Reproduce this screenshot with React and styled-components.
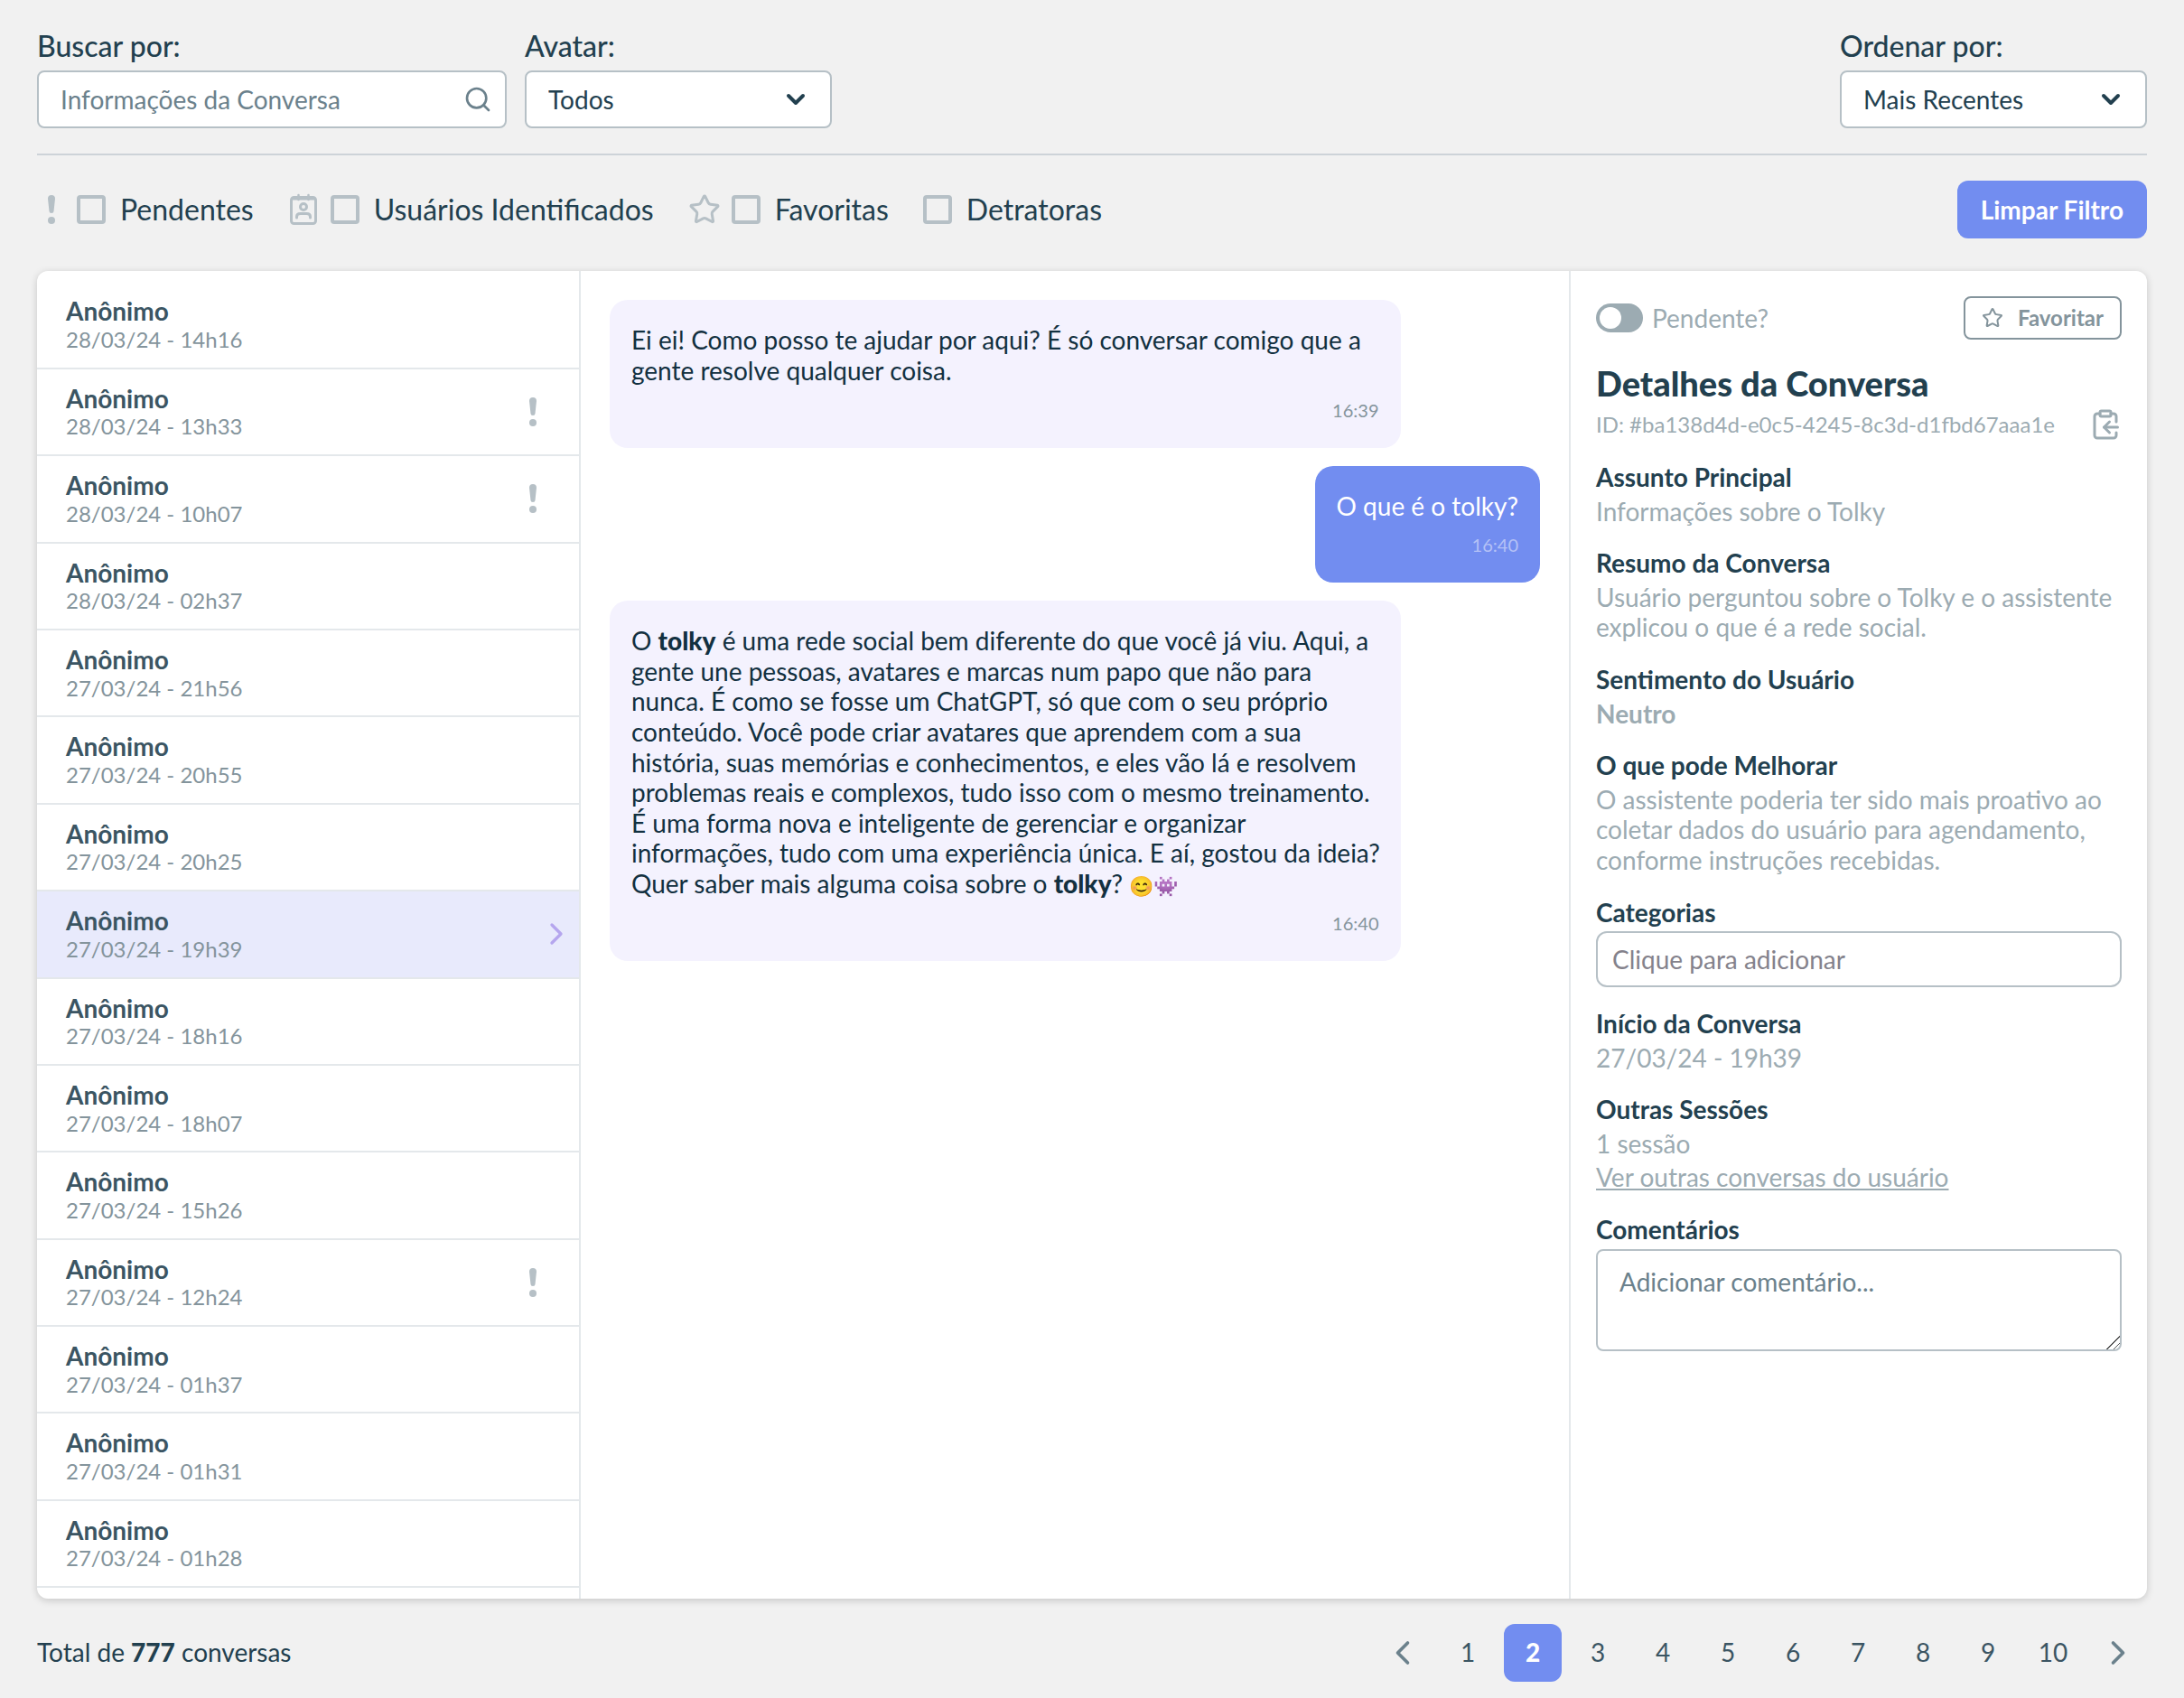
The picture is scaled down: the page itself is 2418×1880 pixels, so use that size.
import styled, { createGlobalStyle } from "styled-components";
import { ChevronDown, ChevronLeft, ChevronRight, ClipboardCopy, Search, Star } from "lucide-react";

const conversations = [
  { id: 1, date: "28/03/24 - 14h16" },
  { id: 2, date: "28/03/24 - 13h33", pending: true },
  { id: 3, date: "28/03/24 - 10h07", pending: true },
  { id: 4, date: "28/03/24 - 02h37" },
  { id: 5, date: "27/03/24 - 21h56" },
  { id: 6, date: "27/03/24 - 20h55" },
  { id: 7, date: "27/03/24 - 20h25" },
  { id: 8, date: "27/03/24 - 19h39", selected: true },
  { id: 9, date: "27/03/24 - 18h16" },
  { id: 10, date: "27/03/24 - 18h07" },
  { id: 11, date: "27/03/24 - 15h26" },
  { id: 12, date: "27/03/24 - 12h24", pending: true },
  { id: 13, date: "27/03/24 - 01h37" },
  { id: 14, date: "27/03/24 - 01h31" },
  { id: 15, date: "27/03/24 - 01h28" },
];

const pages = [1, 2, 3, 4, 5, 6, 7, 8, 9, 10];

export default function App() {
  return (
    <Page>
      <GlobalStyle />
      <TopBar>
        <Field $width={520}>
          <FieldLabel htmlFor="search">Buscar por:</FieldLabel>
          <Control>
            <SearchInput id="search" type="search" placeholder="Informações da Conversa" />
            <ControlIcon $right={16} $color="#6b818c">
              <Search size={32} strokeWidth={2} />
            </ControlIcon>
          </Control>
        </Field>
        <Field $width={340}>
          <FieldLabel htmlFor="avatar">Avatar:</FieldLabel>
          <Select id="avatar" value="Todos" />
        </Field>
        <Field $width={340} $end>
          <FieldLabel htmlFor="order">Ordenar por:</FieldLabel>
          <Select id="order" value="Mais Recentes" />
        </Field>
      </TopBar>

      <FilterBar>
        <Filter>
          <AlertIcon />
          <Checkbox type="checkbox" />
          Pendentes
        </Filter>
        <Filter>
          <BadgeIcon />
          <Checkbox type="checkbox" />
          Usuários Identificados
        </Filter>
        <Filter>
          <Star size={36} strokeWidth={2} color="#b6c0c6" />
          <Checkbox type="checkbox" />
          Favoritas
        </Filter>
        <Filter>
          <Checkbox type="checkbox" />
          Detratoras
        </Filter>
        <ClearButton type="button">Limpar Filtro</ClearButton>
      </FilterBar>

      <Panel>
        <List>
          {conversations.map(({ id, date, pending, selected }) => (
            <li key={id}>
              <Row type="button" $selected={selected}>
                <RowText>
                  <RowName>Anônimo</RowName>
                  <RowDate>{date}</RowDate>
                </RowText>
                <Slot>{pending && <AlertIcon />}</Slot>
                <Slot>{selected && <ChevronRight size={40} strokeWidth={2} color="#b5a6ee" />}</Slot>
              </Row>
            </li>
          ))}
        </List>

        <Chat>
          <Bubble>
            <Message>
              Ei ei! Como posso te ajudar por aqui? É só conversar comigo que a gente resolve qualquer coisa.
            </Message>
            <Time>16:39</Time>
          </Bubble>
          <Bubble $mine>
            <p>O que é o tolky?</p>
            <Time $mine>16:40</Time>
          </Bubble>
          <Bubble>
            <Message>
              O <strong>tolky</strong> é uma rede social bem diferente do que você já viu. Aqui, a gente une
              pessoas, avatares e marcas num papo que não para nunca. É como se fosse um ChatGPT, só que com o
              seu próprio conteúdo. Você pode criar avatares que aprendem com a sua história, suas memórias e
              conhecimentos, e eles vão lá e resolvem problemas reais e complexos, tudo isso com o mesmo
              treinamento. É uma forma nova e inteligente de gerenciar e organizar informações, tudo com uma
              experiência única. E aí, gostou da ideia? Quer saber mais alguma coisa sobre o{" "}
              <strong>tolky</strong>? <Emoji>😊👾</Emoji>
            </Message>
            <Time>16:40</Time>
          </Bubble>
        </Chat>

        <Details>
          <DetailsTop>
            <ToggleLabel>
              <Toggle type="checkbox" role="switch" />
              Pendente?
            </ToggleLabel>
            <FavoriteButton type="button">
              <Star size={24} strokeWidth={2} />
              Favoritar
            </FavoriteButton>
          </DetailsTop>
          <Title>Detalhes da Conversa</Title>
          <IdLine>
            <span>ID: #ba138d4d-e0c5-4245-8c3d-d1fbd67aaa1e</span>
            <CopyButton type="button" aria-label="Copiar ID">
              <ClipboardCopy size={36} strokeWidth={2} />
            </CopyButton>
          </IdLine>
          <Sections>
            <Section>
              <Heading>Assunto Principal</Heading>
              <p>Informações sobre o Tolky</p>
            </Section>
            <Section>
              <Heading>Resumo da Conversa</Heading>
              <p>Usuário perguntou sobre o Tolky e o assistente explicou o que é a rede social.</p>
            </Section>
            <Section>
              <Heading>Sentimento do Usuário</Heading>
              <Mood>Neutro</Mood>
            </Section>
            <Section>
              <Heading>O que pode Melhorar</Heading>
              <p>
                O assistente poderia ter sido mais proativo ao coletar dados do usuário para agendamento,
                conforme instruções recebidas.
              </p>
            </Section>
            <Section>
              <Heading as="label" htmlFor="categories">Categorias</Heading>
              <CategoryInput id="categories" type="text" placeholder="Clique para adicionar" />
            </Section>
            <Section>
              <Heading>Início da Conversa</Heading>
              <p>27/03/24 - 19h39</p>
            </Section>
            <Section>
              <Heading>Outras Sessões</Heading>
              <p>1 sessão</p>
              <OtherLink href="#">Ver outras conversas do usuário</OtherLink>
            </Section>
            <Section>
              <Heading as="label" htmlFor="comments">Comentários</Heading>
              <Comment id="comments" placeholder="Adicionar comentário..." />
            </Section>
          </Sections>
        </Details>
      </Panel>

      <Footer>
        <p>
          Total de <strong>777</strong> conversas
        </p>
        <Pagination>
          <PageButton type="button" aria-label="Anterior">
            <ChevronLeft size={44} strokeWidth={2} color="#6b818c" />
          </PageButton>
          {pages.map((page) => (
            <PageButton type="button" key={page} $active={page === 2}>
              {page}
            </PageButton>
          ))}
          <PageButton type="button" aria-label="Próxima">
            <ChevronRight size={44} strokeWidth={2} color="#6b818c" />
          </PageButton>
        </Pagination>
      </Footer>
    </Page>
  );
}

function Select({ id, value }) {
  return (
    <Control>
      <SelectBox id={id} defaultValue={value}>
        <option>{value}</option>
      </SelectBox>
      <ControlIcon $right={24} $color="#22404f">
        <ChevronDown size={32} strokeWidth={3} />
      </ControlIcon>
    </Control>
  );
}

function AlertIcon() {
  return (
    <svg width="32" height="32" viewBox="0 0 32 32" fill="#b6c0c6" aria-hidden="true">
      <path d="M12 4a4 4 0 0 1 8 0l-1.5 14a2.5 2 0 0 1-5 0z" />
      <circle cx="16" cy="28" r="4" />
    </svg>
  );
}

function BadgeIcon() {
  return (
    <svg width="35" height="36" viewBox="-1 0 35 36" fill="none" stroke="#b6c0c6" strokeWidth="3" strokeLinecap="round" aria-hidden="true">
      <rect x="2.5" y="4.5" width="27" height="29" rx="3" />
      <path d="M3 6.5h26" strokeWidth="2" />
      <path d="M10.5 2v5M21.5 2v5" strokeWidth="2.5" />
      <circle cx="16" cy="15" r="3.5" />
      <path d="M8.5 27v-1c0-2.5 2-3.5 4-3.5h7c2 0 4 1 4 3.5v1" />
    </svg>
  );
}

const GlobalStyle = createGlobalStyle`
  * {
    box-sizing: border-box;
    margin: 0;
    padding: 0;
  }

  body {
    background-color: #f1f1f1;
    color: #22404f;
    font-family: Lato, "Open Sans", sans-serif;
    font-size: 28px;
    line-height: 1.2;
  }

  button, input, select, textarea {
    font: inherit;
    color: inherit;
  }

  button {
    cursor: pointer;
  }

  strong {
    font-weight: 900;
  }
`;

const Page = styled.main`
  display: flex;
  flex-direction: column;
  height: 100vh;
  padding: 32px 41px 18px;
`;

const TopBar = styled.header`
  display: flex;
  gap: 20px;
  padding-bottom: 28px;
  border-bottom: 2px solid #cdd3d8;
`;

const Field = styled.div`
  display: flex;
  flex-direction: column;
  gap: 8px;
  width: ${({ $width }) => $width}px;
  margin-left: ${({ $end }) => ($end ? "auto" : "0")};
`;

const FieldLabel = styled.label`
  font-size: 32px;
  font-weight: 500;
`;

const Control = styled.div`
  position: relative;
`;

const SearchInput = styled.input`
  width: 100%;
  height: 64px;
  padding: 0 64px 0 24px;
  appearance: none;
  background-color: #fff;
  border: 2px solid #b6c0c6;
  border-radius: 8px;

  &::placeholder {
    color: #6b818c;
  }
`;

const SelectBox = styled(SearchInput).attrs({ as: "select" })``;

const ControlIcon = styled.span`
  display: flex;
  align-items: center;
  position: absolute;
  top: 0;
  bottom: 0;
  right: ${({ $right }) => $right}px;
  color: ${({ $color }) => $color};
  pointer-events: none;
`;

const FilterBar = styled.div`
  display: flex;
  align-items: center;
  gap: 38px;
  padding: 28px 0 36px;
`;

const Filter = styled.label`
  display: flex;
  align-items: center;
  gap: 12px;
  font-size: 32px;
`;

const Checkbox = styled.input`
  appearance: none;
  width: 32px;
  height: 32px;
  margin-right: 4px;
  border: 4px solid #b6c0c6;
  border-radius: 4px;
`;

const ClearButton = styled.button`
  height: 64px;
  margin-left: auto;
  padding: 0 26px;
  font-weight: 700;
  color: #fff;
  background-color: #728df0;
  border: none;
  border-radius: 12px;
`;

const Panel = styled.section`
  flex: 1;
  min-height: 0;
  display: grid;
  grid-template-columns: 602px 1fr 640px;
  overflow: hidden;
  background-color: #fff;
  border-radius: 12px;
  box-shadow: 0 2px 8px rgb(0 0 0 / 18%);
`;

const List = styled.ul`
  padding-top: 12px;
  list-style: none;
  overflow: hidden;
  border-right: 2px solid #e4e8eb;
`;

const Row = styled.button`
  display: flex;
  align-items: center;
  width: 100%;
  padding: 16px 12px 16px 32px;
  text-align: left;
  background-color: ${({ $selected }) => ($selected ? "#e8eafc" : "transparent")};
  border: none;
  border-bottom: 2px solid #e4e8eb;
`;

const RowText = styled.span`
  flex: 1;
  display: flex;
  flex-direction: column;
`;

const RowName = styled.span`
  font-weight: 700;
  color: #3b5563;
`;

const RowDate = styled.span`
  font-size: 24px;
  color: #84949c;
`;

const Slot = styled.span`
  display: flex;
  justify-content: center;
  width: 26px;
  flex-shrink: 0;

  svg {
    flex-shrink: 0;
  }
`;

const Chat = styled.div`
  display: flex;
  flex-direction: column;
  align-items: flex-start;
  gap: 20px;
  padding: 32px;
`;

const Bubble = styled.article`
  display: flex;
  flex-direction: column;
  gap: 14px;
  max-width: 85%;
  padding: 28px 24px 30px;
  align-self: ${({ $mine }) => ($mine ? "flex-end" : "flex-start")};
  color: ${({ $mine }) => ($mine ? "#fff" : "#123040")};
  background-color: ${({ $mine }) => ($mine ? "#728df0" : "#f4f2fe")};
  border-radius: 20px;
`;

const Message = styled.p`
  margin-right: -6px;
`;

const Emoji = styled.span`
  font-size: 22px;
  line-height: 1;
`;

const Time = styled.time`
  align-self: flex-end;
  font-size: 20px;
  color: ${({ $mine }) => ($mine ? "#b4c1f6" : "#84949c")};
`;

const Details = styled.aside`
  padding: 28px;
  color: #9cabb2;
  border-left: 2px solid #e4e8eb;
`;

const DetailsTop = styled.div`
  display: flex;
  align-items: center;
  justify-content: space-between;
`;

const ToggleLabel = styled.label`
  display: flex;
  align-items: center;
  gap: 10px;
`;

const Toggle = styled.input`
  appearance: none;
  width: 52px;
  height: 32px;
  padding: 4px;
  background-color: #9cabb2;
  border-radius: 16px;

  &::before {
    content: "";
    display: block;
    width: 24px;
    height: 24px;
    background-color: #fff;
    border-radius: 50%;
  }

  &:checked::before {
    margin-left: auto;
  }
`;

const FavoriteButton = styled.button`
  display: flex;
  align-items: center;
  gap: 16px;
  height: 48px;
  padding: 0 18px;
  font-size: 24px;
  font-weight: 700;
  color: #84949c;
  background-color: #fff;
  border: 2px solid #84949c;
  border-radius: 8px;
`;

const Title = styled.h2`
  margin-top: 26px;
  font-size: 38px;
  font-weight: 900;
  color: #22404f;
`;

const IdLine = styled.div`
  display: flex;
  align-items: center;
  justify-content: space-between;
  margin-top: 4px;
  font-size: 24px;
`;

const CopyButton = styled.button`
  display: flex;
  color: #9cabb2;
  background: none;
  border: none;
`;

const Sections = styled.div`
  display: flex;
  flex-direction: column;
  gap: 24px;
  margin-top: 24px;
`;

const Section = styled.section`
  display: flex;
  flex-direction: column;
  align-items: flex-start;
  gap: 4px;
`;

const Heading = styled.h3`
  font-size: 28px;
  font-weight: 700;
  color: #22404f;
`;

const Mood = styled.p`
  font-weight: 700;
`;

const CategoryInput = styled.input`
  width: 100%;
  height: 62px;
  padding: 0 16px;
  border: 2px solid #b6c0c6;
  border-radius: 12px;

  &::placeholder {
    color: #84828c;
  }
`;

const OtherLink = styled.a`
  color: inherit;
`;

const Comment = styled.textarea`
  width: 100%;
  height: 113px;
  padding: 18px 24px;
  border: 2px solid #b6c0c6;
  border-radius: 8px;
  resize: vertical;

  &::placeholder {
    color: #6b818c;
  }

  &::-webkit-resizer {
    background: linear-gradient(
      135deg,
      transparent 48%,
      #555 48% 54%,
      transparent 54% 74%,
      #555 74% 80%,
      transparent 80%
    );
  }
`;

const Footer = styled.footer`
  display: flex;
  align-items: center;
  justify-content: space-between;
  padding-top: 28px;
`;

const Pagination = styled.nav`
  display: flex;
  gap: 8px;
`;

const PageButton = styled.button`
  display: flex;
  align-items: center;
  justify-content: center;
  width: 64px;
  height: 64px;
  font-weight: ${({ $active }) => ($active ? 900 : 400)};
  color: ${({ $active }) => ($active ? "#fff" : "#3b5563")};
  background-color: ${({ $active }) => ($active ? "#728df0" : "transparent")};
  border: none;
  border-radius: 12px;
`;
